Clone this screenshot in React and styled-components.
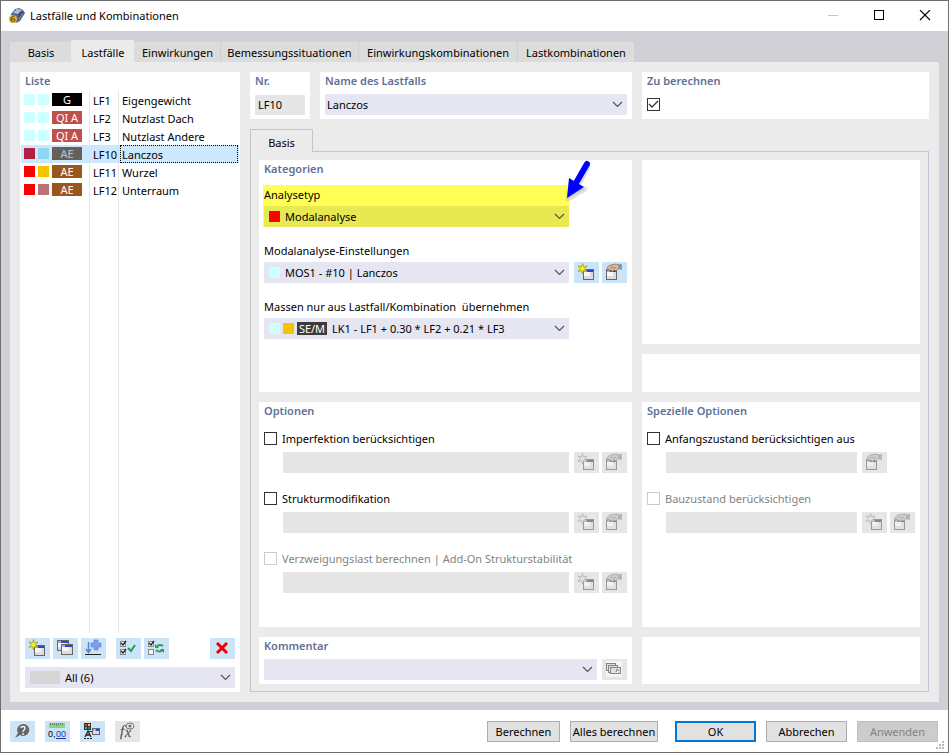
import React, { useState } from 'react';
import styled, { createGlobalStyle } from 'styled-components';

const GlobalStyle = createGlobalStyle`
  * {
    box-sizing: border-box;
  }
  body {
    margin: 0;
    background: #fff;
    color: #000;
    font-family: 'Noto Sans', 'Open Sans', sans-serif;
    font-size: 11px;
    line-height: 18px;
  }
  button, input, select {
    font: inherit;
    color: inherit;
    margin: 0;
  }
`;

const Window = styled.div`
  display: flex;
  flex-direction: column;
  min-height: 100vh;
  border: 1px solid #6e6e6e;
`;

const TitleBar = styled.header`
  display: flex;
  align-items: center;
  height: 30px;
  padding: 0 17px 0 8px;
`;

const WindowTitle = styled.h1`
  flex: 1;
  margin: 0 0 0 5px;
  font-size: 11px;
  font-weight: 400;
`;

const WindowButtons = styled.div`
  display: flex;
  gap: 34px;
`;

const WindowButton = styled.button`
  width: 12px;
  height: 12px;
  padding: 0;
  border: 0;
  background: none;
  svg {
    display: block;
  }
`;

const Body = styled.main`
  flex: 1;
  display: flex;
  flex-direction: column;
  padding: 9px 9px 8px;
  background: #d1d0d6;
`;

const Tabs = styled.nav`
  display: flex;
  align-items: flex-end;
  height: 22px;
`;

const Tab = styled.button`
  height: ${(p) => (p.$active ? 22 : 20)}px;
  width: ${(p) => p.$width}px;
  padding: ${(p) => (p.$active ? 4 : 2)}px 0 0;
  border: 0;
  border-left: 1px solid ${(p) => (p.$line ? '#cfcfcf' : 'transparent')};
  background: ${(p) => (p.$active ? '#ebebeb' : '#dcdcdc')};
  white-space: nowrap;
`;

const Page = styled.section`
  flex: 1;
  display: grid;
  grid-template-columns: 220px minmax(0, 1fr);
  gap: 10px;
  padding: 10px;
  background: #ebebeb;
`;

const Panel = styled.section`
  display: flex;
  flex-direction: column;
  min-width: 0;
  padding: 0 5px 4px;
  background: #fff;
`;

const Title = styled.h2`
  height: 19px;
  margin: 0;
  font-size: 11px;
  font-weight: 600;
  color: #5f6f96;
`;

const ListPanel = styled(Panel)`
  padding: 0 0 4px;
  ${Title} {
    padding-left: 5px;
  }
`;

const ListArea = styled.div`
  flex: 1;
  margin: 0 1px;
  background:
    linear-gradient(#e6e6e6, #e6e6e6) 68px 0 / 1px 100% no-repeat,
    linear-gradient(#e6e6e6, #e6e6e6) 97px 0 / 1px 100% no-repeat;
`;

const CaseTable = styled.table`
  width: 100%;
  table-layout: fixed;
  border-collapse: collapse;
`;

const CaseRow = styled.tr`
  height: 18px;
  background: ${(p) => (p.$selected ? '#cce8ff' : 'transparent')};
  cursor: default;
`;

const Cell = styled.td`
  width: ${(p) => (p.$width ? `${p.$width}px` : 'auto')};
  padding: 0 0 0 3px;
  line-height: 18px;
  vertical-align: top;
  white-space: nowrap;
`;

const CaseId = styled.span`
  display: block;
  height: 18px;
  line-height: 20px;
`;

const Marks = styled.div`
  display: flex;
  align-items: center;
  gap: 3px;
  height: 17px;
`;

const Swatch = styled.span`
  flex: none;
  width: ${(p) => p.$width || 11}px;
  height: ${(p) => (p.$width ? 13 : 11)}px;
  background: ${(p) => p.$color};
`;

const Badge = styled.span`
  flex: none;
  width: 30px;
  height: 13px;
  background: ${(p) => p.$color};
  color: ${(p) => p.$ink || '#fff'};
  line-height: 13px;
  text-align: center;
`;

const CaseName = styled.span`
  display: block;
  height: 18px;
  margin-right: 1px;
  padding-left: 1px;
  border: 1px dotted ${(p) => (p.$focused ? '#000' : 'transparent')};
  line-height: 18px;
`;

const Toolbar = styled.div`
  display: flex;
  gap: 3px;
  padding: 5px 5px 8px;
`;

const ToolGroup = styled.div`
  display: flex;
  gap: 3px;
  margin-right: ${(p) => (p.$last ? 'auto' : '7px')};
`;

const IconButton = styled.button`
  flex: none;
  width: 25px;
  height: 21px;
  padding: 0;
  border: 0;
  background: ${(p) => (p.disabled ? '#e6e6e6' : '#cce4f7')};
  svg {
    display: block;
    filter: ${(p) => (p.disabled ? 'grayscale(1) opacity(0.6)' : 'none')};
  }
`;

const ComboBox = styled.div`
  position: relative;
  flex: 1;
  display: flex;
  align-items: center;
  gap: 3px;
  min-width: 0;
  height: 21px;
  padding-left: ${(p) => (p.$marks ? 5 : 2)}px;
  background: ${(p) => (p.$marked ? '#e8e852' : '#e6e6f2')};
  select {
    flex: 1;
    min-width: 0;
    height: 21px;
    padding: 0 20px 0 ${(p) => (p.$marks ? 2 : 0)}px;
    border: 0;
    outline: 0;
    appearance: none;
    background: transparent;
  }
  > svg {
    position: absolute;
    right: 4px;
    top: 7px;
    pointer-events: none;
  }
`;

const ListFilter = styled.div`
  display: flex;
  padding: 0 5px;
`;

const Detail = styled.div`
  display: flex;
  flex-direction: column;
  min-width: 0;
`;

const HeadRow = styled.div`
  display: grid;
  grid-template-columns: 60px minmax(0, 1fr) 287px;
  gap: 10px;
  margin-bottom: 10px;
`;

const Controls = styled.div`
  display: flex;
  align-items: center;
  gap: 5px;
  height: 21px;
  margin-top: 3px;
`;

const NumberInput = styled.input`
  width: 100%;
  height: 20px;
  padding: 0 3px;
  border: 0;
  background: #e6e6e6;
`;

const SubTab = styled.button`
  position: relative;
  align-self: flex-start;
  width: 63px;
  height: 23px;
  margin-bottom: -1px;
  padding: 3px 0 0;
  border: 1px solid #c4c3d2;
  border-bottom: 0;
  background: #ebebeb;
`;

const Frame = styled.div`
  flex: 1;
  display: grid;
  grid-template-columns: minmax(0, 1fr) 278px;
  grid-template-rows: 232fr 225fr auto;
  gap: 10px;
  padding: 8px 8px 7px;
  border: 1px solid #c4c3d2;
`;

const PreviewStack = styled.div`
  display: flex;
  flex-direction: column;
  gap: 10px;
`;

const Preview = styled(Panel)`
  flex: ${(p) => (p.$height ? `0 0 ${p.$height}px` : '1')};
`;

const Groups = styled.div`
  display: flex;
  flex-direction: column;
  gap: 14px;
  margin-top: 6px;
`;

const FieldGrid = styled.div`
  display: grid;
  grid-template-columns: minmax(0, 1fr) 53px;
  column-gap: 5px;
`;

const Field = styled.div`
  background: ${(p) => (p.$marked ? '#ffff55' : 'transparent')};
  box-shadow: ${(p) => (p.$marked ? '-1px 0 0 #ffff55' : 'none')};
`;

const FieldLabel = styled.label`
  display: block;
  height: 21px;
  line-height: 20px;
  white-space: pre;
`;

const Actions = styled.div`
  display: flex;
  align-items: flex-end;
  gap: 3px;
`;

const CheckRow = styled.label`
  display: flex;
  align-items: center;
  gap: 5px;
  height: 25px;
  padding-bottom: 2px;
  color: ${(p) => (p.$disabled ? '#838383' : '#000')};
  white-space: nowrap;
`;

const Box = styled.span`
  position: relative;
  flex: none;
  width: 13px;
  height: 13px;
  input {
    display: block;
    width: 13px;
    height: 13px;
    border: 1px solid #333;
    appearance: none;
    background: #fff;
  }
  input:disabled {
    border-color: #ccc;
  }
  svg {
    position: absolute;
    left: 0;
    top: 0;
    pointer-events: none;
  }
`;

const OptionRow = styled(FieldGrid)`
  padding-left: 19px;
`;

const OptionValue = styled.input`
  width: 100%;
  height: 21px;
  padding: 0 3px;
  border: 0;
  background: #e6e6e6;
`;

const Footer = styled.footer`
  position: relative;
  display: flex;
  align-items: center;
  justify-content: space-between;
  height: 42px;
  padding: 0 10px 0 9px;
`;

const FooterTools = styled.div`
  display: flex;
  gap: 10px;
`;

const FooterButtons = styled.div`
  display: flex;
  gap: 10px;
`;

const PushButton = styled.button`
  width: ${(p) => p.$width || 81}px;
  height: 21px;
  padding: 0;
  border: ${(p) => (p.$primary ? '2px solid #0078d7' : '1px solid #adadad')};
  background: #e1e1e1;
  line-height: 17px;
  white-space: nowrap;
  &:disabled {
    border-color: #bfbfbf;
    background: #ccc;
    color: #838383;
  }
`;

const PushGroup = styled(FooterButtons)`
  margin-right: 7px;
`;

const Grip = styled.svg`
  position: absolute;
  right: 3px;
  bottom: 2px;
`;

const Pointer = styled.svg`
  position: absolute;
  right: -25px;
  top: -26px;
  z-index: 1;
  pointer-events: none;
`;

const FieldWithPointer = styled(Field)`
  position: relative;
`;

/* Icons are drawn on the 25x21 face of the tool button. */
const Icon = ({ children }) => (
  <svg width="25" height="21" viewBox="0 0 25 21" aria-hidden="true">{children}</svg>
);

const MiniWindow = ({ x, y, w = 11, h = 11 }) => (
  <g shapeRendering="crispEdges">
    <rect x={x} y={y} width={w} height={h} fill="#6a6462" />
    <rect x={x + 1} y={y + 1} width={w - 2} height="2" fill="#9fb0f0" />
    <rect x={x + 4} y={y + 1} width={w - 5} height="2" fill="#2446dc" />
    <rect x={x + 1} y={y + 3} width={w - 2} height={h - 4} fill="#dddbde" />
    <rect x={x + 1} y={y + 3} width={w - 5} height={h - 7} fill="#f6f6f6" />
  </g>
);

const NewIcon = () => (
  <Icon>
    <MiniWindow x={9} y={7} />
    <path d="M8.500 1.500 9.600 4.800 13 4 10.600 6.700 13 9.400 9.600 8.600 8.500 12 7.400 8.600 4 9.400 6.400 6.700 4 4 7.400 4.800Z" fill="#fff200" stroke="#8f8a2a" strokeWidth=".7" />
  </Icon>
);

const EditIcon = () => (
  <Icon>
    <MiniWindow x={4} y={7} />
    <path d="m15 3 4-1h1v6l-4-1Z" fill="#6f9fd0" />
    <path d="M5 7c0-2 2-4 4-4l5-1 3 1v3l-3 3-2-1-2 2-1-2-2 1V7L5 9Z" fill="#dcb795" stroke="#7d6450" strokeWidth=".7" />
    <path d="m8 6 3-1M11 7l3-2" stroke="#8a6c55" strokeWidth=".7" />
  </Icon>
);

const CopyIcon = () => (
  <Icon>
    <MiniWindow x={4} y={2} w={12} h={11} />
    <MiniWindow x={8} y={6} w={12} h={11} />
  </Icon>
);

const ImportIcon = () => (
  <Icon>
    <path d="M13 2h4v3h3v4h-3v3h-4V9h-3V5h3Z" fill="#7f9ce8" stroke="#5b7fd6" strokeWidth=".6" />
    <path d="M7.500 4v10M5 11l2.500 3.500L10 11" fill="none" stroke="#4f8ac4" strokeWidth="1.500" />
    <path d="M4 16.500h16" stroke="#222" />
  </Icon>
);

const SmallCheck = ({ y, checked }) => (
  <g fill="none">
    <rect x="4.500" y={y + 0.5} width="5" height="5" fill="#f2f2f2" stroke="#8a8a8a" />
    {checked && <path d={`M5 ${y + 2}l2 2 3-4`} stroke="#222" strokeWidth="1.300" />}
  </g>
);

const CheckAllIcon = () => (
  <Icon>
    <SmallCheck y={3} checked />
    <SmallCheck y={11} checked />
    <path d="m12 10 3 3 4-6" fill="none" stroke="#16a34a" strokeWidth="2" />
  </Icon>
);

const ToggleIcon = () => (
  <Icon>
    <SmallCheck y={3} checked />
    <SmallCheck y={11} />
    <path d="M19 8c-3-2-5-1-6 1M12 12c2 2 5 2 6 0" fill="none" stroke="#2f9d5c" strokeWidth="2" />
    <path d="M11 6v4h4ZM20 15v-4h-4Z" fill="#2f9d5c" />
  </Icon>
);

const DeleteIcon = () => (
  <Icon>
    <path d="m7 5 10 10M17 5 7 15" stroke="#f00000" strokeWidth="3" />
  </Icon>
);

const HelpIcon = () => (
  <Icon>
    <path d="M13 3a6 6 0 1 1-3 11l-5 3 3-5a6 6 0 0 1 5-9Z" fill="#666" />
    <path d="M11 7c0-2 4-2 4 0 0 2-2 2-2 4M13 12v2" fill="none" stroke="#e6f1fa" strokeWidth="1.400" />
  </Icon>
);

const UnitsIcon = () => (
  <Icon>
    <rect x="4" y="2" width="16" height="5" fill="#8fcf7f" />
    <path d="M5.500 2v2M7.500 2v2M9.500 2v2M11.500 2v3M13.500 2v2M15.500 2v2M17.500 2v2" stroke="#5e9c55" />
    <text x="3" y="16" fontSize="9" fontFamily="Liberation Sans, sans-serif" fill="#000">0,</text>
    <text x="11" y="16" fontSize="9" fontFamily="Liberation Sans, sans-serif" fill="#1c3c9c">00</text>
    <path d="M11 17.500h10" stroke="#1c3c9c" />
  </Icon>
);

const DisplayIcon = () => (
  <Icon>
    <g shapeRendering="crispEdges">
      <rect x="4" y="2" width="7" height="7" fill="#333" />
      <rect x="5" y="3" width="2" height="2" fill="#f33" />
      <rect x="8" y="3" width="2" height="2" fill="#fd0" />
      <rect x="5" y="6" width="2" height="2" fill="#2d3" />
      <rect x="8" y="6" width="2" height="2" fill="#36f" />
      <path d="M4 17.500h2m1 0h2m1 0h2" stroke="#222" />
    </g>
    <path d="m5 16 3-6 3 6M6 14h4" fill="none" stroke="#222" strokeWidth="1.300" />
    <path d="M9 10.500h3" stroke="#333" />
    <MiniWindow x={12} y={7} w={8} h={7} />
  </Icon>
);

const FormulaIcon = () => (
  <Icon>
    <text x="5" y="15" fontSize="15" fontStyle="italic" fontFamily="Liberation Serif, serif" fill="#000" stroke="#000" strokeWidth=".3">f</text>
    <text x="10" y="16" fontSize="14" fontStyle="italic" fontFamily="Liberation Serif, serif" fill="#000" stroke="#000" strokeWidth=".3">x</text>
    <ellipse cx="15" cy="5" rx="4" ry="3" fill="#f4f4f4" stroke="#222" />
    <circle cx="15" cy="5" r="1.600" fill="#222" />
  </Icon>
);

const CommentIcon = () => (
  <Icon>
    <rect x="4" y="2" width="16" height="16" fill="#fff" />
    <g fill="#ddd" stroke="#444">
      <rect x="4.500" y="4.500" width="9" height="7" />
      <rect x="6.500" y="6.500" width="9" height="7" />
      <rect x="8.500" y="8.500" width="10" height="6" />
    </g>
    <path d="m14 13 1-3 2 2" fill="none" stroke="#444" />
  </Icon>
);

const Chevron = () => (
  <svg width="11" height="7" viewBox="0 0 11 7" aria-hidden="true">
    <path d="m1 1 4.500 4.500L10 1" fill="none" stroke="#555" strokeWidth="1.200" />
  </svg>
);

const AppIcon = () => (
  <svg width="16" height="16" viewBox="0 0 16 16" aria-hidden="true">
    <path d="M2 6 6 1l4-1 4 2 2 3-5 8-4 2-5-4Z" fill="#53698c" />
    <path d="m4 5 4-4 5 1-4 4Z" fill="#9fb4d4" />
    <path d="m9 6 4-3 2 3-5 6Z" fill="#34496e" />
    <path d="m5 3 5 2M7 1l5 2M10 11l4-6" stroke="#c7d4e8" strokeWidth=".7" />
    <circle cx="4" cy="11" r="4" fill="#e2b62c" />
    <path d="M6 8c-3 0-4 2-4 4s4 2 4 0-3-1-4 0" fill="none" stroke="#725a1c" strokeWidth="1.200" />
  </svg>
);

const MAIN_TABS = [
  { label: 'Basis', width: 61 },
  { label: 'Lastfälle', width: 63 },
  { label: 'Einwirkungen', width: 86 },
  { label: 'Bemessungssituationen', width: 138, line: true },
  { label: 'Einwirkungskombinationen', width: 159, line: true },
  { label: 'Lastkombinationen', width: 117, line: true },
];

const CASES = [
  { id: 'LF1', name: 'Eigengewicht', colors: ['#ccffff', '#ccffff'], type: 'G', color: '#000' },
  { id: 'LF2', name: 'Nutzlast Dach', colors: ['#ccffff', '#ccffff'], type: 'QI A', color: '#c0504d' },
  { id: 'LF3', name: 'Nutzlast Andere', colors: ['#ccffff', '#ccffff'], type: 'QI A', color: '#c0504d' },
  { id: 'LF10', name: 'Lanczos', colors: ['#b02142', '#8fd5f4'], type: 'AE', color: '#686058', ink: '#a9c9e4' },
  { id: 'LF11', name: 'Wurzel', colors: ['#ff0000', '#f7c400'], type: 'AE', color: '#99571e' },
  { id: 'LF12', name: 'Unterraum', colors: ['#ff0000', '#bb7173'], type: 'AE', color: '#99571e' },
];

function Combo({ id, value, label, marks, marked }) {
  return (
    <ComboBox $marks={!!marks} $marked={marked}>
      {marks}
      <select id={id} aria-label={label} defaultValue={value}>
        <option>{value}</option>
      </select>
      <Chevron />
    </ComboBox>
  );
}

function Check({ label, defaultChecked = false, disabled }) {
  const [checked, setChecked] = useState(defaultChecked);
  return (
    <Box>
      <input
        type="checkbox"
        aria-label={label}
        checked={checked}
        disabled={disabled}
        onChange={(e) => setChecked(e.target.checked)}
      />
      {checked && (
        <svg width="13" height="13" viewBox="0 0 13 13" aria-hidden="true">
          <path d="m2 6 3 3 6-6" fill="none" stroke="#333" strokeWidth="1.300" />
        </svg>
      )}
    </Box>
  );
}

function Option({ label, disabled, editOnly }) {
  return (
    <div>
      <CheckRow $disabled={disabled}>
        <Check disabled={disabled} />
        {label}
      </CheckRow>
      <OptionRow>
        <OptionValue aria-label={label} disabled />
        <Actions>
          {!editOnly && <IconButton disabled aria-label="Neu"><NewIcon /></IconButton>}
          <IconButton disabled aria-label="Bearbeiten"><EditIcon /></IconButton>
        </Actions>
      </OptionRow>
    </div>
  );
}

function CaseList() {
  const [selected, setSelected] = useState('LF10');
  return (
    <ListPanel>
      <Title>Liste</Title>
      <ListArea>
        <CaseTable>
          <tbody>
            {CASES.map((c) => (
              <CaseRow key={c.id} $selected={c.id === selected} onClick={() => setSelected(c.id)}>
                <Cell $width={69}>
                  <Marks>
                    {c.colors.map((color, i) => <Swatch key={i} $color={color} />)}
                    <Badge $color={c.color} $ink={c.ink}>{c.type}</Badge>
                  </Marks>
                </Cell>
                <Cell $width={27}><CaseId>{c.id}</CaseId></Cell>
                <Cell><CaseName $focused={c.id === selected}>{c.name}</CaseName></Cell>
              </CaseRow>
            ))}
          </tbody>
        </CaseTable>
      </ListArea>
      <Toolbar>
        <ToolGroup>
          <IconButton aria-label="Neu"><NewIcon /></IconButton>
          <IconButton aria-label="Kopieren"><CopyIcon /></IconButton>
          <IconButton aria-label="Importieren"><ImportIcon /></IconButton>
        </ToolGroup>
        <ToolGroup $last>
          <IconButton aria-label="Alle auswählen"><CheckAllIcon /></IconButton>
          <IconButton aria-label="Auswahl umkehren"><ToggleIcon /></IconButton>
        </ToolGroup>
        <IconButton aria-label="Löschen"><DeleteIcon /></IconButton>
      </Toolbar>
      <ListFilter>
        <Combo label="Filter" value="All (6)" marks={<Swatch $color="#d6d6d6" $width={30} />} />
      </ListFilter>
    </ListPanel>
  );
}

function App() {
  const [tab, setTab] = useState('Lastfälle');

  return (
    <>
      <GlobalStyle />
      <Window>
        <TitleBar>
          <AppIcon />
          <WindowTitle>Lastfälle und Kombinationen</WindowTitle>
          <WindowButtons>
            <WindowButton aria-label="Minimieren" disabled>
              <svg width="12" height="12"><path d="M1 5.500h10" stroke="#c4c4c4" /></svg>
            </WindowButton>
            <WindowButton aria-label="Maximieren">
              <svg width="12" height="12"><rect x="1.500" y=".5" width="9" height="9" fill="none" stroke="#000" /></svg>
            </WindowButton>
            <WindowButton aria-label="Schließen">
              <svg width="12" height="12"><path d="m1 0 10 10M11 0 1 10" stroke="#000" strokeWidth="1.100" /></svg>
            </WindowButton>
          </WindowButtons>
        </TitleBar>

        <Body>
          <Tabs>
            {MAIN_TABS.map((t) => (
              <Tab
                key={t.label}
                $width={t.width}
                $line={t.line}
                $active={t.label === tab}
                onClick={() => setTab(t.label)}
              >
                {t.label}
              </Tab>
            ))}
          </Tabs>

          <Page>
            <CaseList />

            <Detail>
              <HeadRow>
                <Panel>
                  <Title as="label" htmlFor="number">Nr.</Title>
                  <Controls><NumberInput id="number" defaultValue="LF10" readOnly /></Controls>
                </Panel>
                <Panel>
                  <Title as="label" htmlFor="name">Name des Lastfalls</Title>
                  <Controls><Combo id="name" value="Lanczos" /></Controls>
                </Panel>
                <Panel>
                  <Title>Zu berechnen</Title>
                  <Controls><Check label="Zu berechnen" defaultChecked /></Controls>
                </Panel>
              </HeadRow>

              <SubTab>Basis</SubTab>
              <Frame>
                <Panel>
                  <Title>Kategorien</Title>
                  <Groups>
                    <FieldGrid>
                      <FieldWithPointer $marked>
                        <FieldLabel htmlFor="analysis">Analysetyp</FieldLabel>
                        <Combo id="analysis" value="Modalanalyse" marked marks={<Swatch $color="#ff0000" />} />
                        <Pointer width="32" height="42" viewBox="0 0 32 42" aria-hidden="true">
                          <path d="m26 8-8 15M6 40l3-12 14 2Z" fill="#9a9a9a" fillOpacity=".3" stroke="#9a9a9a" strokeOpacity=".3" strokeWidth="5" strokeLinecap="round" strokeLinejoin="round" />
                          <path d="M25 5 14 24" stroke="#0000ff" strokeWidth="6" strokeLinecap="round" />
                          <path d="M5 39 7 19l15 9Z" fill="#0000ff" />
                        </Pointer>
                      </FieldWithPointer>
                    </FieldGrid>
                    <FieldGrid>
                      <Field>
                        <FieldLabel htmlFor="settings">Modalanalyse-Einstellungen</FieldLabel>
                        <Combo id="settings" value="MOS1 - #10 | Lanczos" marks={<Swatch $color="#ccffff" />} />
                      </Field>
                      <Actions>
                        <IconButton aria-label="Neu"><NewIcon /></IconButton>
                        <IconButton aria-label="Bearbeiten"><EditIcon /></IconButton>
                      </Actions>
                    </FieldGrid>
                    <FieldGrid>
                      <Field>
                        <FieldLabel htmlFor="masses">{'Massen nur aus Lastfall/Kombination  übernehmen'}</FieldLabel>
                        <Combo
                          id="masses"
                          value="LK1 - LF1 + 0.30 * LF2 + 0.21 * LF3"
                          marks={(
                            <>
                              <Swatch $color="#ccffff" />
                              <Swatch $color="#f7c400" />
                              <Badge $color="#3c3c3c">SE/M</Badge>
                            </>
                          )}
                        />
                      </Field>
                    </FieldGrid>
                  </Groups>
                </Panel>
                <PreviewStack>
                  <Preview />
                  <Preview $height={38} />
                </PreviewStack>

                <Panel>
                  <Title>Optionen</Title>
                  <Groups>
                    <Option label="Imperfektion berücksichtigen" />
                    <Option label="Strukturmodifikation" />
                    <Option label="Verzweigungslast berechnen | Add-On Strukturstabilität" disabled />
                  </Groups>
                </Panel>
                <Panel>
                  <Title>Spezielle Optionen</Title>
                  <Groups>
                    <Option label="Anfangszustand berücksichtigen aus" editOnly />
                    <Option label="Bauzustand berücksichtigen" disabled />
                  </Groups>
                </Panel>

                <Panel>
                  <Title as="label" htmlFor="comment">Kommentar</Title>
                  <Controls>
                    <Combo id="comment" value="" />
                    <IconButton disabled aria-label="Kommentare"><CommentIcon /></IconButton>
                  </Controls>
                </Panel>
                <Panel />
              </Frame>
            </Detail>
          </Page>
        </Body>

        <Footer>
          <FooterTools>
            <IconButton aria-label="Hilfe"><HelpIcon /></IconButton>
            <IconButton aria-label="Einheiten"><UnitsIcon /></IconButton>
            <IconButton aria-label="Anzeige"><DisplayIcon /></IconButton>
            <IconButton aria-label="Formel" disabled><FormulaIcon /></IconButton>
          </FooterTools>
          <FooterButtons>
            <PushGroup>
              <PushButton $width={73}>Berechnen</PushButton>
              <PushButton $width={88}>Alles berechnen</PushButton>
            </PushGroup>
            <PushButton $primary>OK</PushButton>
            <PushButton>Abbrechen</PushButton>
            <PushButton disabled>Anwenden</PushButton>
          </FooterButtons>
          <Grip width="9" height="9" aria-hidden="true">
            <path d="M6 1h2M3 4h2m1 0h2M0 7h2m1 0h2m1 0h2" stroke="#bbb" strokeWidth="2" />
          </Grip>
        </Footer>
      </Window>
    </>
  );
}

export default App;
